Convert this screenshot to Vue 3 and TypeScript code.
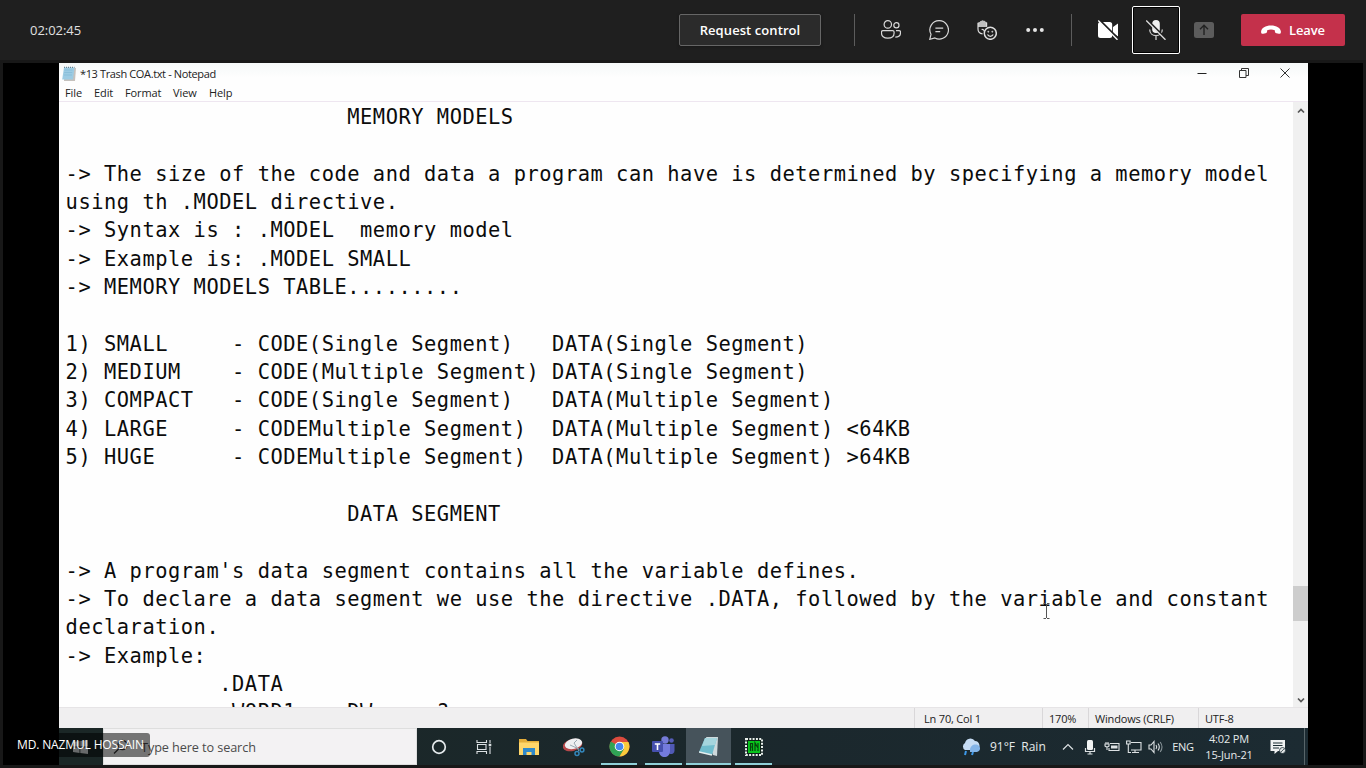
<script setup lang="ts">
const lines: string[] = [
  '                      MEMORY MODELS',
  '',
  '-> The size of the code and data a program can have is determined by specifying a memory model',
  'using th .MODEL directive.',
  '-> Syntax is : .MODEL  memory model',
  '-> Example is: .MODEL SMALL',
  '-> MEMORY MODELS TABLE.........',
  '',
  '1) SMALL     - CODE(Single Segment)   DATA(Single Segment)',
  '2) MEDIUM    - CODE(Multiple Segment) DATA(Single Segment)',
  '3) COMPACT   - CODE(Single Segment)   DATA(Multiple Segment)',
  '4) LARGE     - CODEMultiple Segment)  DATA(Multiple Segment) <64KB',
  '5) HUGE      - CODEMultiple Segment)  DATA(Multiple Segment) >64KB',
  '',
  '                      DATA SEGMENT',
  '',
  "-> A program's data segment contains all the variable defines.",
  '-> To declare a data segment we use the directive .DATA, followed by the variable and constant',
  'declaration.',
  '-> Example:',
  '            .DATA',
  '            .WORD1    DW     ?',
]
</script>

<template>
  <div class="app">
    <header class="top">
      <span class="timer">02:02:45</span>
      <button class="request">Request control</button>
      <i class="rule r1"></i>
      <div class="cell">
        <svg width="20" height="20" viewBox="0 0 20 20" fill="none" stroke="#d8d8d8" stroke-width="1.2">
          <circle cx="6.8" cy="4.4" r="3.7" /><circle cx="15.4" cy="5.3" r="2.6" />
          <path d="M2 10.6h9.6c.9 0 1.5.6 1.5 1.5v.9c0 3.2-2.3 5.2-6.3 5.2S.5 16.2.5 13v-.9c0-.9.6-1.5 1.5-1.5zM15 10.6h3c.9 0 1.500.6 1.500 1.500v.7c0 2.700-1.800 4.400-5.200 4.400" />
        </svg>
      </div>
      <div class="cell">
        <svg width="20" height="20" viewBox="0 0 20 20" fill="none" stroke="#d8d8d8" stroke-width="1.2">
          <path d="M10.300.7a9.200 9.200 0 1 1-4.400 17.300L.8 19.300l1.200-5A9.200 9.200 0 0 1 10.300.7zM6.400 8.100h7.800M6.400 11.700h4.800" />
        </svg>
      </div>
      <div class="cell">
        <svg width="20" height="20" viewBox="0 0 20 20" fill="none" stroke="#dedede" stroke-width="1.2">
          <path d="M1 2.800q1-1.200 1.800-.8Q3 .6 4.300 1 5.300-.4 6.600.8q1.500-.5 1.800 1 1.300-.2 1.300 1.200V7H1z" fill="#bdbdbd" stroke="none" />
          <path d="M1 2.800V9c0 2.900 1.800 4.600 4.600 4.800M9.600 2.500V6.800M7.300 11c-.6-1.300-1.500-1.700-2.700-1.500" />
          <circle cx="13.300" cy="13.300" r="6" stroke-width="1.500" />
          <path d="M10.500 14.500c1.200 2.400 4.500 2.400 5.700 0" /><circle cx="11.300" cy="11.700" r=".6" fill="#dedede" stroke-width=".5" /><circle cx="15.300" cy="11.700" r=".6" fill="#dedede" stroke-width=".5" />
        </svg>
      </div>
      <div class="cell">
        <svg width="20" height="20" viewBox="0 0 20 20" fill="#e4e4e4"><circle cx="3.200" cy="10" r="2" /><circle cx="10" cy="10" r="2" /><circle cx="16.800" cy="10" r="2" /></svg>
      </div>
      <i class="rule r2"></i>
      <div class="cell">
        <svg width="20" height="20" viewBox="0 0 20 20">
          <path d="M0 4.500Q0 2 2.500 2h9.200q2.500 0 2.500 2.500v11q0 2.500-2.500 2.500H2.500Q0 18 0 15.500zM15 7l5-3.400v12.800l-5-3.400z" fill="#fff" />
          <path d="M1.300 0 20 18.700" stroke="#1f1f1f" stroke-width="2.400" /><path d="M.2.500 19.500 19.800" stroke="#fff" stroke-width="1.300" />
        </svg>
      </div>
      <div class="cell mic">
        <svg width="20" height="20" viewBox="0 0 20 20" fill="none">
          <rect x="6.200" y="0" width="7.600" height="13" rx="3.800" fill="#f0f0f0" />
          <path d="M3.700 9.500c0 8.200 12.600 8.200 12.600 0M10 15.800V20" stroke="#ccc" stroke-width="1.300" />
          <path d="M1.300 0 20 18.700" stroke="#1f1f1f" stroke-width="2" /><path d="M.2.500 19.500 19.800" stroke="#ddd" stroke-width="1.300" />
        </svg>
      </div>
      <div class="cell">
        <svg width="20" height="20" viewBox="0 0 20 20"><rect y="2" width="20" height="16" rx="2.500" fill="#5c5c5c" /><path d="M10 15V5.500M6 9.200l4-4 4 4" fill="none" stroke="#222" stroke-width="1.400" /></svg>
      </div>
      <button class="leave">
        <svg width="20" height="10" viewBox="0 0 20 10"><path d="M10 .5c5.500 0 9.500 2.400 9.900 6 .2 1.900-.8 2.600-2.200 2.300l-2.200-.5c-1.500-.4-1.600-1.200-1.700-3.100-2.300-.9-5.300-.9-7.600 0-.1 1.900-.2 2.700-1.700 3.100l-2.200.5C.9 9.100-.1 8.400.1 6.500.5 2.900 4.500.5 10 .5z" fill="#fff" /></svg>
        <span>Leave</span>
      </button>
    </header>

    <main class="stage">
      <section class="screen">
        <div class="title">
          <svg width="16" height="16" viewBox="0 0 16 16"><path d="M4 2h11l-1 13H3z" fill="#c5c1bd" /><path d="M3 1.500h10.500L12 13.500H1.200z" fill="#9ccbe3" /><path d="M3.500 4h8M3.200 6.500h8M3 9h8" stroke="#83bad6" stroke-width=".7" /><path d="M3 1.300h10.500" stroke="#688594" stroke-width="1.300" stroke-dasharray="1 1" /></svg>
          <span class="name">*13 Trash COA.txt - Notepad</span>
          <div class="controls">
            <svg width="12" height="12" viewBox="0 0 12 12"><path d="M1.500 6.500h9" stroke="#222" /></svg>
            <svg width="12" height="12" viewBox="0 0 12 12" fill="none" stroke="#333"><path d="M1.500 3.500h6.500v7H1.500zM3.500 3.500v-2h7v7H8" /></svg>
            <svg width="12" height="12" viewBox="0 0 12 12"><path d="m1.500 1.500 9 9m0-9-9 9" stroke="#333" /></svg>
          </div>
        </div>
        <nav class="menu"><span class="m1">File</span><span class="m2">Edit</span><span class="m3">Format</span><span class="m4">View</span><span>Help</span></nav>
        <div class="editor">
          <div class="text"><div v-for="(line, i) in lines" :key="i" class="line">{{ line }}</div></div>
          <div class="scroll">
            <svg width="10" height="8" viewBox="0 0 10 8"><path d="m2 5.500 3-3 3 3" fill="none" stroke="#555" stroke-width="1.700" /></svg>
            <div class="thumb"></div>
            <svg class="down" width="10" height="8" viewBox="0 0 10 8"><path d="m2 2.500 3 3 3-3" fill="none" stroke="#555" stroke-width="1.700" /></svg>
          </div>
          <svg class="caret" width="7" height="16" viewBox="0 0 7 16"><path d="M.5.500H3M4 .5h2.500M3.500 1v14M.5 15.500H3M4 15.500h2.500" fill="none" stroke="#555" /></svg>
        </div>
        <div class="status"><span class="s1">Ln 70, Col 1</span><span class="s2">170%</span><span class="s3">Windows (CRLF)</span><span class="s4">UTF-8</span></div>
        <footer class="taskbar">
          <div class="start"><svg width="15" height="14" viewBox="0 0 15 14" fill="#d8dcdd"><path d="M0 2 6.500 1v5.600H0zM7.300.9 15 0v6.600H7.300zM0 7.400h6.500V13L0 12zM7.300 7.400H15V14l-7.700-1z" /></svg></div>
          <div class="search">
            <svg width="16" height="16" viewBox="0 0 16 16" fill="none" stroke="#333" stroke-width="1.300"><circle cx="9.500" cy="6" r="4.500" /><path d="M6.300 9.200 1 14.500" /></svg>
            <span>Type here to search</span>
          </div>
          <div class="task"><svg width="16" height="16" viewBox="0 0 16 16"><circle cx="8" cy="8" r="6.300" fill="none" stroke="#e5eaec" stroke-width="1.700" /></svg></div>
          <div class="task"><svg width="16" height="16" viewBox="0 0 16 16" fill="none" stroke="#dce1e3" stroke-width="1.100"><path d="M1 1v2.500h9.500V1M1 15v-2.500h9.500V15M1.500 5.500H10v5H1.500zM14 1v3M14 8v7" /><path d="M12.700 6h2.600" stroke-width="2.500" /></svg></div>
          <div class="task"><svg width="20" height="18" viewBox="0 0 20 18"><path d="M0 1h7l1.500 2H20v13H0z" fill="#e4ad39" /><path d="M0 4.500h20V17H0z" fill="#ffd66a" /><path d="M4 10h12v7h-3.500v-3h-5v3H4z" fill="#2f88c9" /></svg></div>
          <div class="task"><svg width="22" height="20" viewBox="0 0 22 20"><ellipse cx="9.500" cy="8" rx="10" ry="6" transform="rotate(-15 9.500 8)" fill="#b8494b" /><ellipse cx="10.500" cy="6.800" rx="8.800" ry="5.200" transform="rotate(-14 10.500 6.800)" fill="#eef0f2" /><path d="m11 6 5 8M7 8l9 4M11 6l3-3" stroke="#9aa9b2" /><g fill="none" stroke="#3386ba" stroke-width="1.500"><circle cx="14" cy="16.500" r="2" /><circle cx="19" cy="13" r="1.900" /></g></svg></div>
          <div class="task on"><svg width="21" height="21" viewBox="0 0 22 22"><circle cx="11" cy="11" r="10.500" fill="#dc4b3e" /><path d="M11 11 1.900 5.700A10.500 10.500 0 0 0 11 21.500l5-8z" fill="#30a355" /><path d="M11 6.200h9.300A10.500 10.500 0 0 1 11 21.500l4.700-8z" fill="#f9cb3c" /><circle cx="11" cy="11" r="5" fill="#fff" /><circle cx="11" cy="11" r="4" fill="#4487ee" /></svg></div>
          <div class="task on"><svg width="23" height="21" viewBox="0 0 23 21"><circle cx="13" cy="4" r="3.700" fill="#757bd8" /><circle cx="19.500" cy="4.500" r="2.300" fill="#565db8" /><path d="M15 8h7.500v6.500c0 3-2.500 4-5 3.500z" fill="#5059b5" /><path d="M7 8h11v7c0 8-11 8-11 0z" fill="#747bdd" /><rect x="0" y="5" width="11" height="11" rx="1" fill="#4650ae" /><path d="M2.800 8h5.400M5.500 8v6" stroke="#fff" stroke-width="1.600" /></svg></div>
          <div class="task on active"><svg width="20" height="20" viewBox="0 0 20 20"><path d="M7 0h12l-1 19-4-1z" fill="#ced9dc" /><path d="M6 1h12l-5 17L0 15z" fill="#70bdcd" /><path d="M6 1h12l-2 7L3 9z" fill="#a5d5dd" /><path d="m0 15 13 3" stroke="#e5eff0" stroke-width="1.500" /></svg></div>
          <div class="task on"><svg width="18" height="18" viewBox="0 0 18 18"><rect x="1" y="1" width="16" height="16" fill="#10221b" stroke="#e9efec" stroke-width="2" stroke-dasharray="2 1.300" /><rect x="3" y="3" width="12" height="12" fill="#08c51d" /><path d="M5.500 13V5.500h2V13M5.500 9h2M10 13V5l3 5V5v8" fill="none" stroke="#06430d" stroke-width="1.200" /></svg></div>
          <div class="tray">
            <svg width="20" height="18" viewBox="0 0 20 18"><path d="M4 12a4 4 0 0 1 0-7 5.500 5.500 0 0 1 10-2 4.800 4.800 0 0 1 2 9z" fill="#c6dcf4" /><path d="M9 12c0-5 6-7 9-4 2 2 1 5-2 6H9z" fill="#83b4e8" /><path d="m5 13-1 4M12 14l-1 3" stroke="#3d99e9" stroke-width="2" /></svg>
            <span class="weather">91°F&nbsp; Rain</span>
            <svg width="12" height="12" viewBox="0 0 12 12"><path d="m1 8.500 5-5 5 5" fill="none" stroke="#dce1e3" stroke-width="1.200" /></svg>
            <svg width="12" height="16" viewBox="0 0 12 16"><rect x="3" y="1" width="6" height="10" rx="1.500" fill="#f2f4f4" /><path d="M1.500 9v3.500h9V9M6 12.500V15M3.500 15h5" fill="none" stroke="#dce1e3" stroke-width="1.200" /></svg>
            <svg width="16" height="12" viewBox="0 0 16 12" fill="none" stroke="#dce1e3" stroke-width="1.100"><path d="M6 2.500h9v7H5V7M1 3h4v2q-2 2-4 0zM2 1v2M4 1v2M3 6v3" /><path d="M7 6h6.500" stroke-width="3" /></svg>
            <svg width="16" height="14" viewBox="0 0 16 14" fill="none" stroke="#dce1e3" stroke-width="1.100"><path d="M5 2.500h10v7.500H5M9 10v2.500M6 12.500h7M.6 1h3.500v3H.6zM2.300 4v8.500H5" /></svg>
            <svg width="15" height="14" viewBox="0 0 15 14" fill="none" stroke="#dce1e3" stroke-width="1.100"><path d="M1 5h2l3-3.500v11L3 9H1zM8 5q1.500 2 0 4M10 3.500q2.600 3.500 0 7" /><path d="M12.200 2q3.600 5 0 10" stroke="#879397" /></svg>
            <span class="lang">ENG</span>
            <div class="clock"><span>4:02 PM</span><span>15-Jun-21</span></div>
            <svg width="16" height="16" viewBox="0 0 16 16"><path d="M.5 1h14.500v11H8l-3.500 3V12h-4z" fill="#f0f2f2" /><path d="M3 4h9.500M3 6.500h9.500M3 9h6" stroke="#1b2c32" /><circle cx="12.500" cy="11.500" r="3" fill="#dfe3e4" stroke="#1b2c32" stroke-width=".8" /><path d="m11 13 3-3" stroke="#1b2c32" stroke-width=".7" /></svg>
          </div>
        </footer>
      </section>
      <div class="presenter">MD. NAZMUL HOSSAIN</div>
    </main>
  </div>
</template>

<style>
body { margin: 0; overflow: hidden; }
</style>
<style scoped>
* { box-sizing: border-box; }
svg { display: block; flex: none; }
span { white-space: nowrap; }
.app { width: 1366px; height: 768px; background: #181818; font-family: "Open Sans", "Noto Sans", sans-serif; overflow: hidden; }
.top { height: 60px; background: #1f1f1f; display: flex; align-items: center; }
.timer { width: 649px; margin-left: 30px; font-size: 13px; letter-spacing: -0.05px; color: #e0e0e0; }
button { font-family: inherit; font-size: 13px; font-weight: 600; color: #fff; padding: 0; height: 32px; border-radius: 2px; display: flex; align-items: center; justify-content: center; white-space: nowrap; }
.request { width: 142px; border: 1px solid #666; background: #2b2b2b; letter-spacing: 0.08px; box-shadow: 0 1px 3px #1118; }
.rule { width: 1px; height: 32px; background: #5c5c5c; }
.r1 { margin: 0 12px 0 33px; }
.r2 { margin: 0 12px; }
.cell { width: 48px; height: 48px; display: flex; align-items: center; justify-content: center; }
.mic { border: 1px solid #fff; border-radius: 2px; box-shadow: inset 0 0 0 1px #000; }
.leave { width: 104px; border: 0; background: #c4314b; margin-left: 13px; gap: 8px; letter-spacing: -0.1px; }
.stage { position: relative; margin: 3px 3px 0; height: 702px; background: #000; display: flex; }
.screen { width: 1249px; height: 702px; margin-left: 56px; background: #fefefe; display: flex; flex-direction: column; color: #222; }
.title { height: 21px; display: flex; align-items: center; padding-left: 2px; background: linear-gradient(#f5f8f8, #fefefe 70%); }
.name { font-size: 11px; margin-left: 3px; letter-spacing: -0.37px; }
.controls { margin: -2px 17px 0 auto; display: flex; gap: 29.5px; }
.menu { height: 18px; border-bottom: 1px solid #eee6f0; display: flex; align-items: center; padding-left: 6px; font-size: 11px; line-height: 17px; letter-spacing: -0.1px; }
.m1 { width: 29px; } .m2 { width: 31px; } .m3 { width: 48px; } .m4 { width: 36px; }
.editor { position: relative; height: 605px; display: flex; overflow: hidden; }
.text { flex: 1; padding: 1px 0 0 6.6px; }
.line { height: 28.35px; line-height: 28.35px; white-space: pre; font-family: "DejaVu Sans Mono", monospace; font-size: 20.4px; letter-spacing: 0.526px; color: #0c0c0c; }
.scroll { width: 15px; background: #f0f0f0; display: flex; flex-direction: column; align-items: center; padding: 5px 0 3px; }
.thumb { width: 15px; height: 35px; margin-top: 471px; background: #cdcdcd; }
.down { margin-top: auto; }
.caret { position: absolute; left: 984px; top: 501px; }
.status { height: 21px; background: #f0eff0; border-top: 1px solid #e6e4e6; display: flex; padding-left: 855px; font-size: 11px; line-height: 21px; letter-spacing: -0.18px; }
.status span { border-left: 1px solid #d9d7d9; }
.s1 { width: 128px; padding-left: 9px; } .s2 { width: 46px; padding-left: 6px; } .s3 { width: 110px; padding-left: 6px; } .s4 { padding-left: 6px; width: 109px; }
.taskbar { height: 37px; background: linear-gradient(90deg, #1b2726, #1b282d 60%, #1c2b32); display: flex; }
.start { width: 44px; display: flex; align-items: center; padding-left: 14px; }
.search { width: 314px; background: #f3f2f3; border: 1px solid #dedede; display: flex; align-items: center; padding-left: 9px; font-size: 12.7px; letter-spacing: -0.1px; color: #4b4b4b; gap: 12px; }
.task { width: 44.9px; height: 37px; display: flex; align-items: center; justify-content: center; position: relative; }
.on::after { content: ""; position: absolute; bottom: 0; left: 4px; right: 4px; height: 2px; background: #8fd0d8; }
.active { background: #46535b; }
.active::after { left: 0; right: 0; }
.tray { width: 350px; margin-left: auto; border-right: 1px solid #586569; margin-right: 3px; display: grid; grid-template-columns: 32px 70px 22px 22px 22px 22px 21px 34px 58px 40px; align-items: center; justify-items: center; color: #e6eaeb; font-size: 11px; }
.weather { justify-self: start; padding-left: 3px; font-size: 12px; }
.lang { letter-spacing: -0.3px; }
.clock { display: flex; flex-direction: column; align-items: center; line-height: 16px; font-size: 11px; letter-spacing: -0.15px; }
.presenter { position: absolute; left: 2px; top: 670px; width: 145px; height: 24px; padding-left: 12px; border-radius: 3px; background: rgba(0, 0, 0, 0.52); color: #fff; font-size: 12px; line-height: 24px; letter-spacing: -0.14px; white-space: nowrap; }
</style>
